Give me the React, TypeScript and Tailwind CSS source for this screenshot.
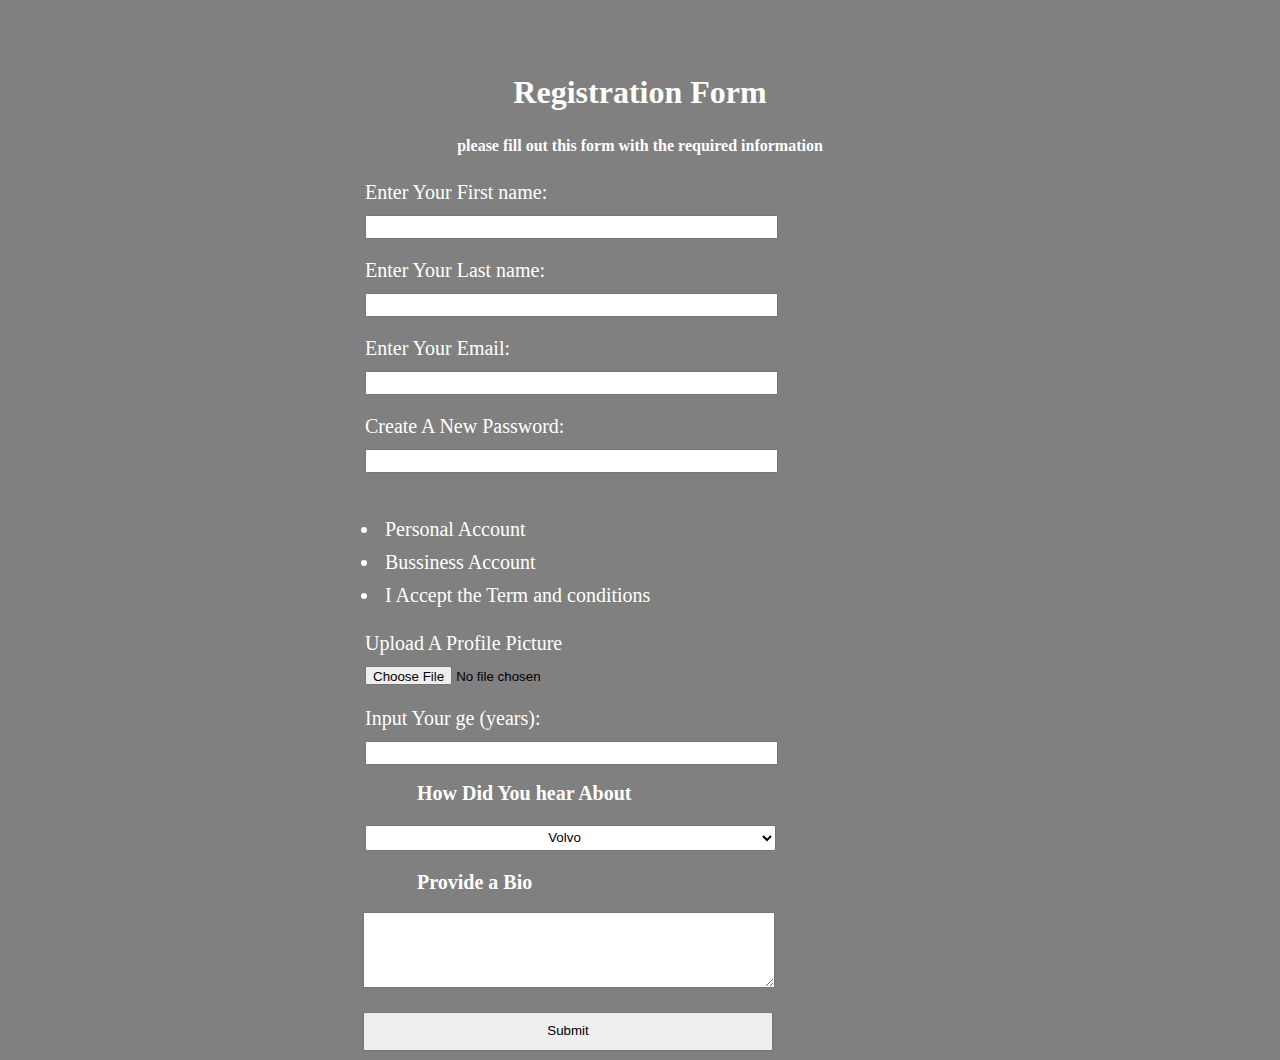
import React from 'react';

const serif = "font-['Liberation_Serif',_'Times_New_Roman',_serif]";
const sans = "font-['Liberation_Sans',_Arial,_sans-serif]";

function Field({ label, type = 'text' }: { label: string; type?: string }) {
  return (
    <div className="mb-[20px]">
      <label className="block h-[23px] leading-[23px] text-[20px]">{label}</label>
      <input
        type={type}
        className="mt-[11px] block h-[24px] w-[413px] bg-white border border-[#767676] text-black"
      />
    </div>
  );
}

export default function App() {
  const options = ['Personal Account', 'Bussiness Account', 'I Accept the Term and conditions'];

  return (
    <div className={`min-h-[1060px] bg-[#808080] text-white ${serif}`}>
      <div className="mx-auto w-[550px] pt-[74px]">
        {/* Header */}
        <h1 className="text-center text-[32px] font-bold leading-[37px]">Registration Form</h1>
        <p className="mt-[26px] text-center text-[16px] font-bold leading-[18px]">
          please fill out this form with the required information
        </p>

        <form className="mt-[26px]" onSubmit={(e) => e.preventDefault()}>
          <Field label="Enter Your First name:" />
          <Field label="Enter Your Last name:" />
          <Field label="Enter Your Email:" type="email" />
          <Field label="Create A New Password:" type="password" />

          {/* Options */}
          <ul className="mt-[40px]">
            {options.map((o) => (
              <li key={o} className="flex items-center h-[33px] text-[20px] leading-[33px]">
                <span className="ml-[-4px] mr-[18px] h-[6px] w-[6px] rounded-full bg-white" />
                <span>{o}</span>
              </li>
            ))}
          </ul>

          <div className="mt-[20px]">
            <label className="block h-[23px] leading-[23px] text-[20px]">Upload A Profile Picture</label>
            <input
              type="file"
              className={`mt-[11px] block text-[13.33px] text-black ${sans} file:mr-[4px] file:h-[19px] file:px-[7px] file:bg-[#efefef] file:border file:border-[#767676] file:rounded-[2px] file:text-black file:text-[13.33px]`}
            />
          </div>

          <div className="mt-[20px]">
            <label className="block h-[23px] leading-[23px] text-[20px]">Input Your ge (years):</label>
            <input
              type="number"
              className="mt-[11px] block h-[24px] w-[413px] bg-white border border-[#767676] text-black"
            />
          </div>

          <h3 className="mt-[17px] pl-[52px] h-[23px] leading-[23px] text-[20px] font-bold">
            How Did You hear About
          </h3>
          <select
            defaultValue="volvo"
            className={`mt-[20px] block h-[26px] w-[411px] bg-white border border-[#767676] rounded-[2px] text-black text-[13.33px] ${sans} [text-align-last:center]`}
          >
            <option value="volvo">Volvo</option>
            <option value="saab">Saab</option>
            <option value="fiat">Fiat</option>
            <option value="audi">Audi</option>
          </select>

          <h3 className="mt-[20px] pl-[52px] h-[23px] leading-[23px] text-[20px] font-bold">
            Provide a Bio
          </h3>
          <textarea className="mt-[18px] ml-[-2px] block h-[76px] w-[412px] bg-white border border-[#767676] text-black" />

          <button
            type="submit"
            className={`mt-[24px] ml-[-2px] block h-[39px] w-[410px] bg-[#efefef] border border-[#767676] rounded-[2px] text-black text-[13.33px] ${sans}`}
          >
            Submit
          </button>
        </form>
      </div>
    </div>
  );
}
